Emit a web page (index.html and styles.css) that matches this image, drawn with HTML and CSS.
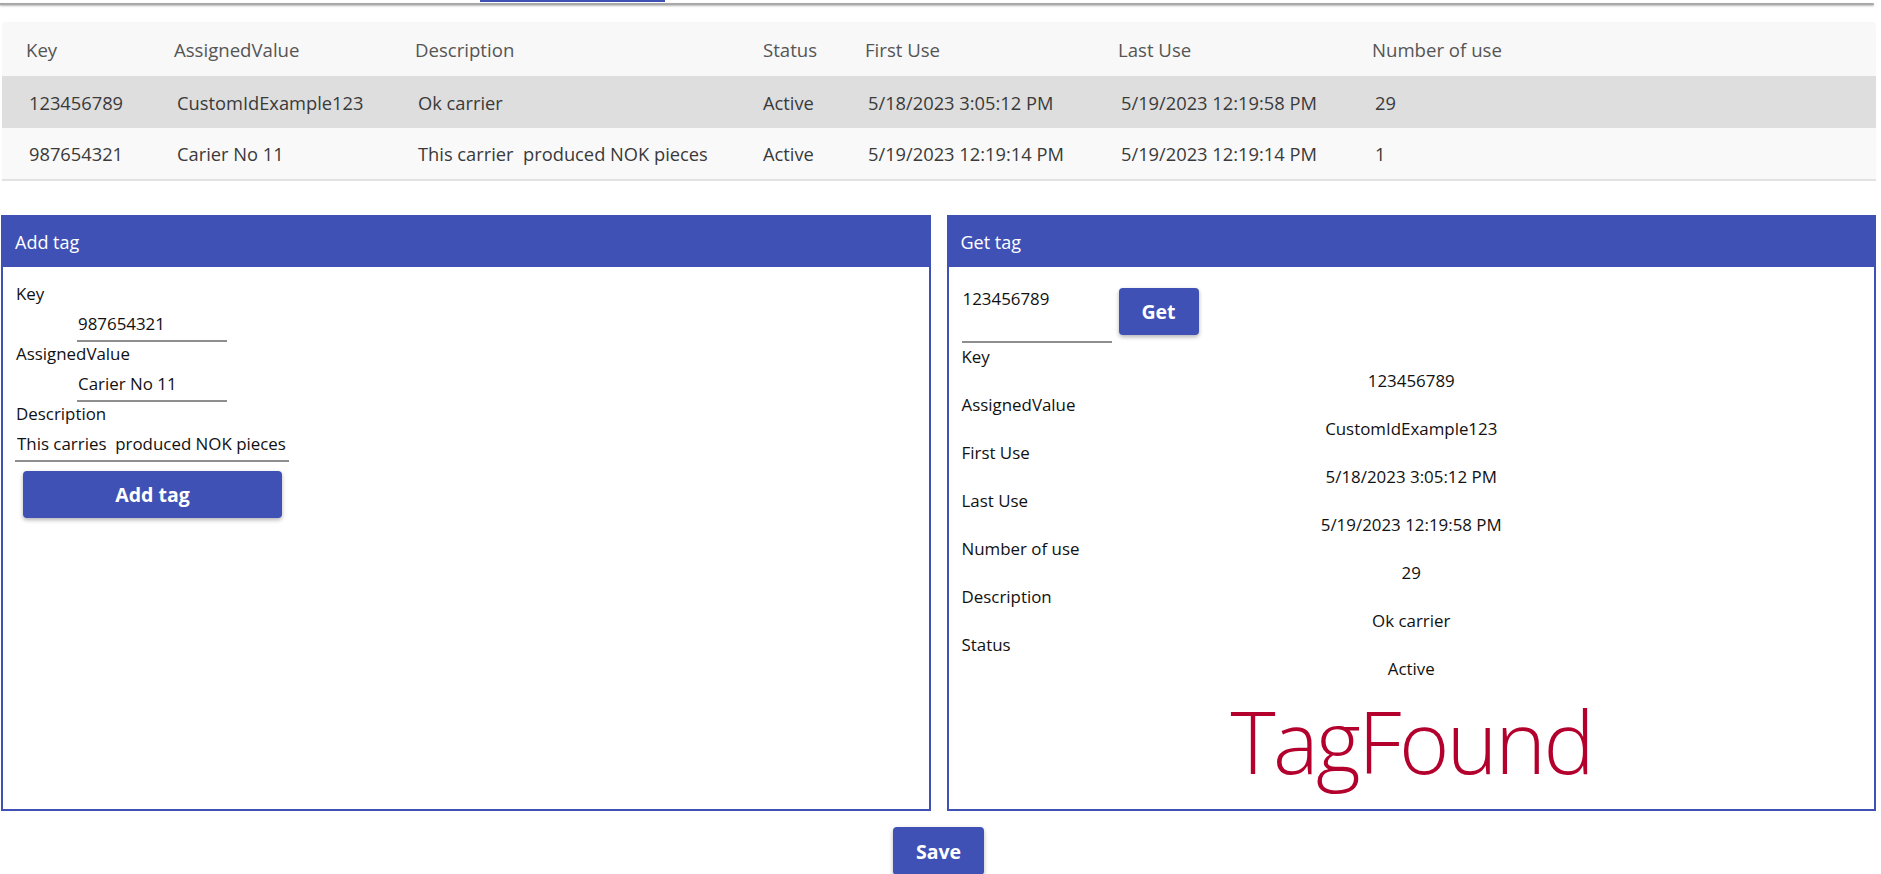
FILE: index.html
```html
<!DOCTYPE html>
<html>
<head>
<meta charset="utf-8">
<link rel="stylesheet" href="styles.css">
</head>
<body>
<div class="tabs">
  <div class="tab-indicator"></div>
  <div class="tab-line"></div>
</div>

<div class="table-wrap">
  <table class="grid">
    <colgroup>
      <col class="c1"><col class="c2"><col class="c3"><col class="c4"><col class="c5"><col class="c6"><col class="c7">
    </colgroup>
    <thead>
      <tr><th>Key</th><th>AssignedValue</th><th>Description</th><th>Status</th><th>First Use</th><th>Last Use</th><th>Number of use</th></tr>
    </thead>
    <tbody>
      <tr class="selected"><td>123456789</td><td>CustomIdExample123</td><td>Ok carrier</td><td class="st">Active</td><td>5/18/2023 3:05:12 PM</td><td>5/19/2023 12:19:58 PM</td><td>29</td></tr>
      <tr><td>987654321</td><td>Carier No 11</td><td>This carrier&nbsp; produced NOK pieces</td><td class="st">Active</td><td>5/19/2023 12:19:14 PM</td><td>5/19/2023 12:19:14 PM</td><td>1</td></tr>
    </tbody>
  </table>
</div>

<div class="panels">
  <section class="panel">
    <div class="panel-head">Add tag</div>
    <div class="panel-body add-body">
      <div class="label">Key</div>
      <input class="field short" type="text" value="987654321">
      <div class="label">AssignedValue</div>
      <input class="field short" type="text" value="Carier No 11">
      <div class="label">Description</div>
      <input class="field long" type="text" value="This carries  produced NOK pieces">
      <button class="btn add-btn">Add tag</button>
    </div>
  </section>

  <section class="panel">
    <div class="panel-head">Get tag</div>
    <div class="panel-body get-body">
      <div class="get-row">
        <input class="field get-field" type="text" value="123456789">
        <button class="btn get-btn">Get</button>
      </div>
      <div class="label">Key</div>
      <div class="value">123456789</div>
      <div class="label">AssignedValue</div>
      <div class="value">CustomIdExample123</div>
      <div class="label">First Use</div>
      <div class="value">5/18/2023 3:05:12 PM</div>
      <div class="label">Last Use</div>
      <div class="value">5/19/2023 12:19:58 PM</div>
      <div class="label">Number of use</div>
      <div class="value">29</div>
      <div class="label">Description</div>
      <div class="value">Ok carrier</div>
      <div class="label">Status</div>
      <div class="value">Active</div>
      <div class="found">TagFound</div>
    </div>
  </section>
</div>

<div class="save-row">
  <button class="btn save-btn">Save</button>
</div>
</body>
</html>
```

FILE: styles.css
```css
* { box-sizing: border-box; }

html, body {
  margin: 0;
  padding: 0;
  background: #ffffff;
  font-family: "Open Sans", "Noto Sans", Lato, sans-serif;
  color: #111;
  overflow: hidden;
}

/* top tab strip */
.tabs {
  height: 6px;
}
.tab-indicator {
  margin-left: 480px;
  width: 185px;
  height: 2px;
  background: #3f51b5;
}
.tab-line {
  margin-top: 1px;
  margin-right: 7px;
  height: 2px;
  background: #a9a9a9;
  border-radius: 0 2px 2px 0;
  box-shadow: 0 1px 2px rgba(0, 0, 0, 0.3);
}

/* table */
.table-wrap {
  margin: 16px 5px 0 2px;
}
.grid {
  width: 100%;
  border-collapse: collapse;
  table-layout: fixed;
  font-size: 18.3px;
  border-radius: 4px 4px 0 0;
  overflow: hidden;
}
.c1 { width: 148px; }
.c2 { width: 241px; }
.c3 { width: 348px; }
.c4 { width: 102px; }
.c5 { width: 253px; }
.c6 { width: 254px; }
.c7 { width: auto; }

.grid thead tr {
  background: #f8f8f8;
  height: 54px;
}
.grid th {
  text-align: left;
  font-weight: 500;
  font-size: 18.6px;
  color: #555;
  padding: 0 0 0 24px;
  white-space: nowrap;
}
.grid tbody tr {
  background: #f9f9f9;
  height: 52px;
}
.grid tbody tr.selected {
  background: #dedede;
}
.grid tbody tr:last-child {
  border-bottom: 2px solid #e2e2e2;
}
.grid td {
  color: #3a3a3a;
  padding: 0 0 0 27px;
  white-space: nowrap;
}
.grid td.st {
  padding-left: 24px;
}

/* panels */
.panels {
  display: flex;
  gap: 16px;
  margin-top: 34px;
  padding: 0 5px 0 1px;
}
.panel {
  flex: 1;
  height: 596px;
  border: 2px solid #3f51b5;
  display: flex;
  flex-direction: column;
}
.panel-head {
  height: 50px;
  background: #3f51b5;
  color: #fff;
  font-size: 18px;
  display: flex;
  align-items: center;
  padding-left: 12px;
  flex-shrink: 0;
}
.panel-body {
  font-size: 16.9px;
  line-height: 24px;
  color: #111;
}
.add-body {
  padding: 15px 13px;
  display: flex;
  flex-direction: column;
  align-items: flex-start;
}
.label {
  height: 24px;
}
.field {
  border: none;
  border-bottom: 2px solid #8e8e8e;
  outline: none;
  background: transparent;
  font-family: inherit;
  font-size: 16.9px;
  color: #111;
  height: 36px;
  line-height: 24px;
  padding: 5px 1px 5px 1px;
}
.field.short {
  width: 150px;
  margin-left: 61px;
}
.field.long {
  width: 274px;
  margin-left: -1px;
  padding-left: 2px;
}

.btn {
  background: #3f51b5;
  color: #fff;
  border: none;
  border-radius: 4px;
  font-family: inherit;
  font-weight: 700;
  font-size: 19.5px;
  box-shadow: 0 2px 4px rgba(0, 0, 0, 0.3);
  padding: 0;
}
.add-btn {
  margin-top: 9px;
  margin-left: 7px;
  width: 259px;
  height: 47px;
}

.get-body {
  padding: 16px 13px 0 13px;
}
.get-row {
  display: flex;
  align-items: flex-start;
  margin-bottom: 2px;
}
.get-field {
  width: 150px;
  height: 60px;
  padding: 4px 1px 32px 1px;
}
.get-btn {
  margin-left: 7px;
  margin-top: 5px;
  width: 80px;
  height: 47px;
}
.value {
  height: 24px;
  text-align: center;
}
.found {
  margin-top: 10px;
  text-align: center;
  font-weight: 300;
  font-size: 86px;
  line-height: 100px;
  letter-spacing: -2.5px;
  color: #b3002d;
}

.save-row {
  display: flex;
  justify-content: center;
  margin-top: 16px;
  padding: 0 5px 0 1px;
}
.save-btn {
  width: 91px;
  height: 48px;
}
```
